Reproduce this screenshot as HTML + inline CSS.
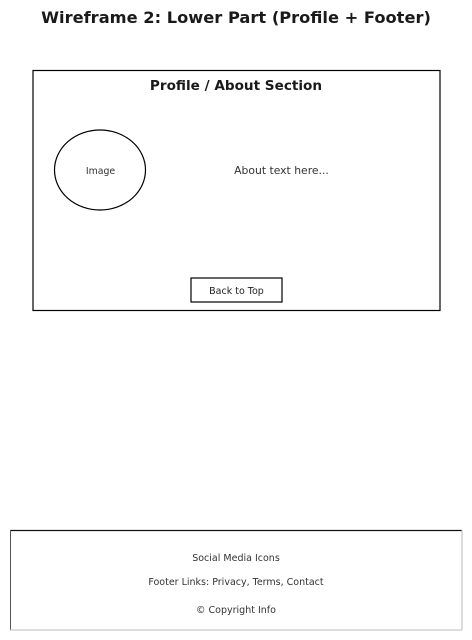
<!DOCTYPE html>
<html><head><meta charset="utf-8"><style>html,body{margin:0;padding:0;background:#fff}svg{display:block}</style></head>
<body>
<svg width="472" height="640" viewBox="0 0 472 640" xmlns="http://www.w3.org/2000/svg" font-family="DejaVu Sans, sans-serif">
<text x="236" y="23" text-anchor="middle" font-size="16.25" font-weight="bold" fill="#1a1a1a">Wireframe 2: Lower Part (Profile + Footer)</text>
<rect x="33" y="70.5" width="407" height="240" fill="none" stroke="#000" stroke-width="1.2"/>
<text x="236" y="90" text-anchor="middle" font-size="13.6" font-weight="bold" fill="#1a1a1a">Profile / About Section</text>
<ellipse cx="100" cy="170" rx="45.5" ry="40" fill="none" stroke="#000" stroke-width="1.2"/>
<text x="100.5" y="174" text-anchor="middle" font-size="9.4" fill="#333">Image</text>
<text x="281.5" y="174" text-anchor="middle" font-size="10.8" fill="#333">About text here...</text>
<rect x="191" y="278" width="91" height="24" fill="none" stroke="#000" stroke-width="1.2"/>
<text x="236.5" y="294" text-anchor="middle" font-size="9.5" fill="#222">Back to Top</text>
<line x1="10" y1="530.5" x2="462" y2="530.5" stroke="#111" stroke-width="1.2"/>
<line x1="10.5" y1="530" x2="10.5" y2="630" stroke="#555" stroke-width="1"/>
<line x1="462" y1="530" x2="462" y2="630" stroke="#bbb" stroke-width="1"/>
<line x1="10" y1="630" x2="462" y2="630" stroke="#bbb" stroke-width="1"/>
<text x="236" y="561" text-anchor="middle" font-size="9.5" fill="#333">Social Media Icons</text>
<text x="236" y="585" text-anchor="middle" font-size="9.5" fill="#333">Footer Links: Privacy, Terms, Contact</text>
<text x="236" y="613" text-anchor="middle" font-size="9.5" fill="#333">© Copyright Info</text>
</svg>
</body></html>
